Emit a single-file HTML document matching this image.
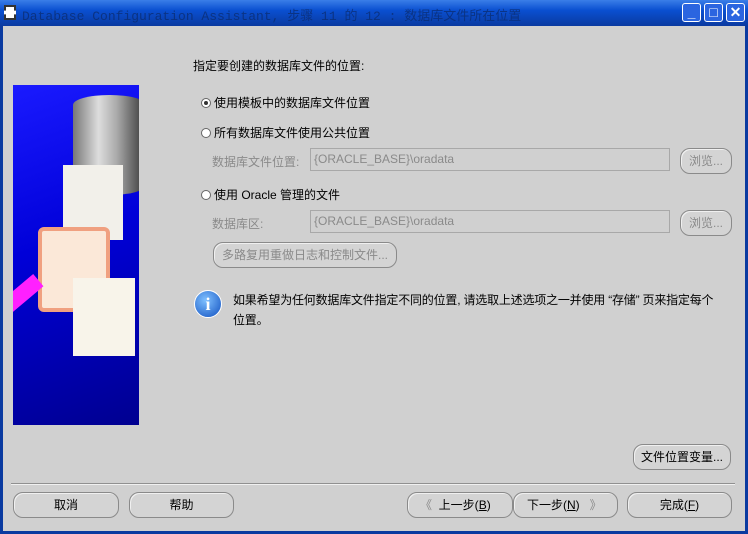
<!DOCTYPE html>
<html><head><meta charset="utf-8"><style>
*{margin:0;padding:0;box-sizing:border-box}
body{width:748px;height:534px;overflow:hidden;background:#0a3aa0;font-family:"Liberation Sans","Noto Sans CJK SC",sans-serif;font-size:12px;color:#000;position:relative}
.title{position:absolute;left:0;top:0;width:748px;height:26px;background:linear-gradient(#3a7ee8,#0a4fd0 40%,#0a3aa0)}
.title .t{position:absolute;left:22px;top:5px;color:#0b2a6a;font-size:13px;font-family:"Liberation Mono","Noto Sans CJK SC",monospace;opacity:.7}
.tb{position:absolute;top:3px;width:19px;height:19px;border:1px solid #fff;border-radius:3px;background:#2b65e0;color:#fff;font-size:14px;text-align:center;line-height:17px;font-weight:bold}
.client{position:absolute;left:3px;top:26px;width:742px;height:505px;background:#d0d0d0}
.a{position:absolute}
.btn{position:absolute;border:1px solid #8a8a8a;border-radius:10px;background:#d4d4d4;text-align:center;line-height:24px;height:26px;box-shadow:inset 1px 1px 0 #f0f0f0}
.dis{color:#8a8a8a}
.field{position:absolute;height:23px;border:1px solid #a8a8a8;background:#d0d0d0;color:#8a8a8a;padding-left:3px;line-height:21px}
.radio{display:inline-block;width:10px;height:10px;border-radius:50%;border:1px solid #666;background:#fff;vertical-align:-1px;margin-right:3px;position:relative}
.radio.on::after{content:"";position:absolute;left:2px;top:2px;width:4px;height:4px;border-radius:50%;background:#333}
</style></head><body>
<div class="title">
<div class="a" style="left:4px;top:5px;width:12px;height:15px;background:#fff;border:2px dashed #333"></div>
<div class="t">Database Configuration Assistant, 步骤 11 的 12 : 数据库文件所在位置</div>
<div class="tb" style="left:682px">_</div>
<div class="tb" style="left:704px">□</div>
<div class="tb" style="left:726px;background:#2b65e0">✕</div>
</div>
<div class="client">
<div class="a" style="left:10px;top:59px;width:126px;height:340px;background:linear-gradient(160deg,#1a1aff 0%,#0000d8 45%,#000090 100%);overflow:hidden">
<div class="a" style="left:60px;top:10px;width:73px;height:100px;background:linear-gradient(90deg,#777,#ddd 35%,#aaa 60%,#333);border-radius:36px/10px"></div>
<div class="a" style="left:50px;top:80px;width:60px;height:75px;background:#f2f0ea"></div>
<div class="a" style="left:25px;top:142px;width:72px;height:85px;background:#fbe8d8;border:4px solid #f0a080;border-radius:6px"></div>
<div class="a" style="left:60px;top:193px;width:62px;height:78px;background:#f8f4ea"></div>
<div class="a" style="left:-10px;top:200px;width:40px;height:16px;background:#ff20ff;transform:rotate(-40deg)"></div>
</div>
<div class="a" style="left:190px;top:31px">指定要创建的数据库文件的位置:</div>
<div class="a" style="left:198px;top:68px"><span class="radio on"></span>使用模板中的数据库文件位置</div>
<div class="a" style="left:198px;top:98px"><span class="radio"></span>所有数据库文件使用公共位置</div>
<div class="a dis" style="left:209px;top:127px">数据库文件位置:</div>
<div class="field" style="left:307px;top:122px;width:360px">{ORACLE_BASE}\oradata</div>
<div class="btn dis" style="left:677px;top:122px;width:52px">浏览...</div>
<div class="a" style="left:198px;top:160px"><span class="radio"></span>使用 Oracle 管理的文件</div>
<div class="a dis" style="left:209px;top:189px">数据库区:</div>
<div class="field" style="left:307px;top:184px;width:360px">{ORACLE_BASE}\oradata</div>
<div class="btn dis" style="left:677px;top:184px;width:52px">浏览...</div>
<div class="btn dis" style="left:210px;top:216px;width:184px">多路复用重做日志和控制文件...</div>
<div class="a" style="left:191px;top:264px;width:28px;height:28px;border-radius:50%;background:radial-gradient(circle at 40% 35%,#7fc0ff,#1050c0);border:1px solid #fff;color:#fff;font-weight:bold;font-size:18px;text-align:center;line-height:26px;font-family:'Liberation Serif',serif">i</div>
<div class="a" style="left:230px;top:264px;line-height:20px;width:500px;letter-spacing:-0.2px">如果希望为任何数据库文件指定不同的位置, 请选取上述选项之一并使用 “存储” 页来指定每个<br>位置。</div>
<div class="btn" style="left:630px;top:418px;width:98px">文件位置变量...</div>
<div class="a" style="left:8px;top:457px;width:724px;height:2px;border-top:1px solid #909090;border-bottom:1px solid #f0f0f0"></div>
<div class="btn" style="left:10px;top:466px;width:106px">取消</div>
<div class="btn" style="left:126px;top:466px;width:105px">帮助</div>
<div class="btn" style="left:404px;top:466px;width:106px;text-align:left;padding-left:12px"><span class="dis">《</span>&nbsp;&nbsp;上一步(<u>B</u>)</div>
<div class="btn" style="left:510px;top:466px;width:105px;text-align:left;padding-left:13px">下一步(<u>N</u>)&nbsp;&nbsp;&nbsp;<span class="dis">》</span></div>
<div class="btn" style="left:624px;top:466px;width:105px">完成(<u>F</u>)</div>
</div>
</body></html>
